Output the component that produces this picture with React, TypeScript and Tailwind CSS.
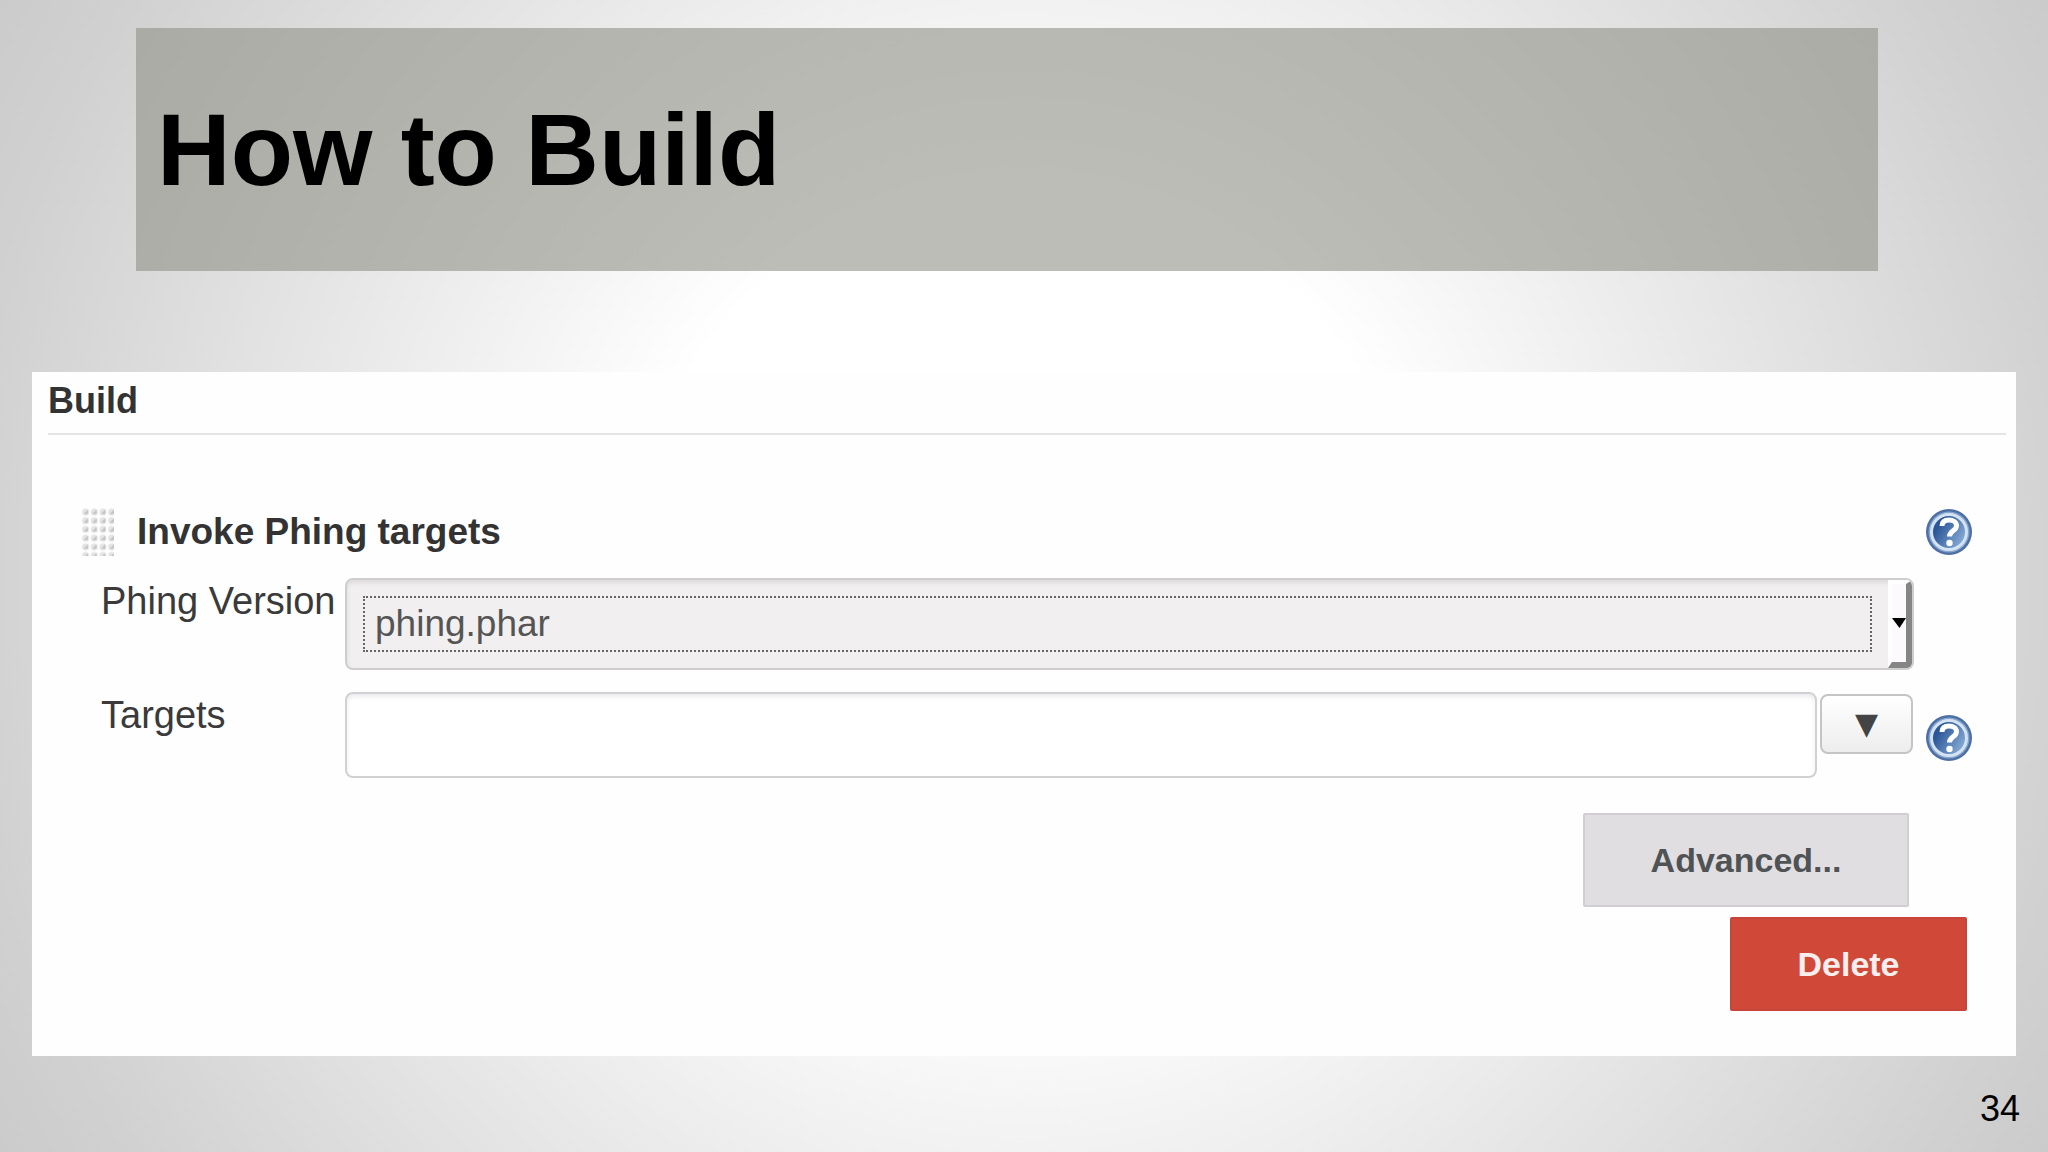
import React from "react";

interface FieldRowProps {
  id: string;
  label: string;
  children: React.ReactNode;
}

const FieldRow: React.FC<FieldRowProps> = ({ id, label, children }) => (
  <div className="flex items-start">
    <label
      htmlFor={id}
      className="w-[244px] shrink-0 text-[38px] leading-[46px] text-[#3a3a3a]"
    >
      {label}
    </label>
    {children}
  </div>
);

const HelpButton: React.FC<{ label: string }> = ({ label }) => (
  <button type="button" aria-label={label} className="block size-12 shrink-0">
    <svg viewBox="0 0 48 48" className="size-full" aria-hidden="true">
      <defs>
        <linearGradient id="help-fill" x1="0" y1="0.2" x2="1" y2="0.8">
          <stop offset="0.2" stopColor="#2c5797" />
          <stop offset="1" stopColor="#8fb4dc" />
        </linearGradient>
      </defs>
      <circle cx="24" cy="24" r="23" fill="#4d6fa3" />
      <circle cx="24" cy="24" r="20.5" fill="#86a5cd" />
      <circle cx="24" cy="24" r="17.5" fill="url(#help-fill)" stroke="#d3e3f4" strokeWidth="3" />
      <path
        d="M17 18c0-4.5 3-6 7-6s7.5 2 7.5 5.800c0 5.200-7 5-7 10.700"
        fill="none"
        stroke="#fff"
        strokeWidth="5"
      />
      <circle cx="24.5" cy="35" r="3.2" fill="#fff" />
    </svg>
  </button>
);

const DragHandle = () => (
  <svg viewBox="0 0 32 48" className="h-12 w-8 shrink-0" aria-hidden="true">
    <defs>
      <pattern id="grip" width="8.7" height="8.7" patternUnits="userSpaceOnUse">
        <circle cx="3.5" cy="4" r="3.4" fill="#e4e4e4" />
        <path d="M6 1.5v4.5H1.5z" fill="#c4c2c2" />
      </pattern>
    </defs>
    <rect width="32" height="48" fill="url(#grip)" />
  </svg>
);

const VersionSelect = () => (
  <div className="relative h-[92px] flex-1 overflow-hidden rounded-lg border-2 border-[#cfcdd0] bg-[#f1efef] p-4 shadow-[inset_0_3px_4px_#dddbdd]">
    <select
      id="phing-version"
      defaultValue="phing.phar"
      className="block h-14 w-[calc(100%-24px)] appearance-none border-2 border-dotted border-[#666] bg-transparent px-2.5 text-[37px] leading-[48px] text-[#555] outline-none"
    >
      <option>phing.phar</option>
    </select>
    {/* bevelled drop-down arrow */}
    <div className="pointer-events-none absolute inset-y-0 right-0 flex w-6 items-center border-t-4 border-r-[6px] border-b-[6px] border-l-4 border-t-white border-r-[#858585] border-b-[#858585] border-l-white bg-[#fcfafc]">
      <svg viewBox="0 0 14 10" className="h-2.5 w-3.5 shrink-0" aria-hidden="true">
        <path d="M0 0h14L7.5 10z" fill="#000" />
      </svg>
    </div>
  </div>
);

export default function App() {
  return (
    <main className="flex min-h-screen flex-col bg-[radial-gradient(circle_farthest-corner_at_center,#fff_33%,#f4f4f5_46%,#e8e8e9_61%,#dcdcdc_76%,#d1d1d1_90%,#cbcbcb_100%)] px-8 pt-7 font-['Liberation_Sans',Arial,sans-serif]">
      <header className="mr-[138px] ml-[104px] flex h-[243px] items-center bg-[#8f9185]/60 px-[21px]">
        <h1 className="text-[102px] leading-none font-bold text-black">How to Build</h1>
      </header>

      <section className="mt-[101px] flex flex-col bg-[#fefefe] pt-[7px] pr-2.5 pb-[45px] pl-4">
        <h2 className="border-b-2 border-[#e4e4e4] pb-2.5 text-[36px] leading-[44px] font-bold text-[#333]">
          Build
        </h2>

        <form className="flex flex-col pt-[73px] pr-[33px] pl-[34px]" onSubmit={(e) => e.preventDefault()}>
          <div className="flex items-center gap-[23px]">
            <DragHandle />
            <h3 className="flex-1 text-[37px] leading-[44px] font-bold text-[#333]">
              Invoke Phing targets
            </h3>
            <HelpButton label="Help for Invoke Phing targets" />
          </div>

          <div className="mt-[22px] flex flex-col gap-[22px] pl-[19px]">
            <div className="pr-[59px]">
              <FieldRow id="phing-version" label="Phing Version">
                <VersionSelect />
              </FieldRow>
            </div>
            <FieldRow id="targets" label="Targets">
              <input
                id="targets"
                type="text"
                className="h-[86px] min-w-0 flex-1 rounded-lg border-2 border-[#d2d0d3] bg-white px-4 text-[37px] text-[#555] shadow-[inset_0_3px_4px_#ececee] outline-none"
              />
              <button
                type="button"
                aria-label="Expand targets"
                className="mt-0.5 ml-[3px] h-[60px] w-[93px] rounded-lg border-2 border-[#c6c4c6] bg-linear-to-b from-white to-[#ededed] font-['DejaVu_Sans',sans-serif] text-[30px] leading-none text-[#444]"
              >
                ▼
              </button>
              <div className="mt-[22px] ml-3">
                <HelpButton label="Help for Targets" />
              </div>
            </FieldRow>
          </div>

          <div className="mt-[35px] flex flex-col items-end gap-2.5">
            <button
              type="button"
              className="mr-16 h-[94px] w-[326px] rounded-xs border-2 border-[#d0ced1] bg-[#e0dee0] text-[34px] font-bold text-[#505356]"
            >
              Advanced...
            </button>
            <button
              type="button"
              className="mr-1.5 h-[94px] w-[237px] rounded-xs border-2 border-[#c6443a] bg-[#cf4838] text-[34px] font-bold text-[#f8eeee]"
            >
              Delete
            </button>
          </div>
        </form>
      </section>

      <footer className="-mr-1 mt-[31px] text-right text-[36px] leading-[44px] text-black">34</footer>
    </main>
  );
}
